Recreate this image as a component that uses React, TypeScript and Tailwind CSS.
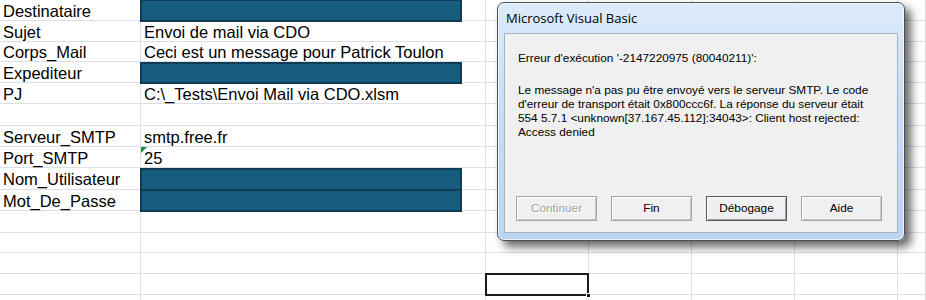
import React from "react";

const rowHeights = [21, 21, 20, 21, 21, 22, 21, 21, 22, 21, 22, 20, 21, 21, 10];
const colWidths = [141, 345, 103, 103, 103, 103, 28];

const rows: [string, string][] = [
  ["Destinataire", ""],
  ["Sujet", "Envoi de mail via CDO"],
  ["Corps_Mail", "Ceci est un message pour Patrick Toulon"],
  ["Expediteur", ""],
  ["PJ", "C:\\_Tests\\Envoi Mail via CDO.xlsm"],
  ["", ""],
  ["Serveur_SMTP", "smtp.free.fr"],
  ["Port_SMTP", "25"],
  ["Nom_Utilisateur", ""],
  ["Mot_De_Passe", ""],
  ["", ""],
  ["", ""],
  ["", ""],
  ["", ""],
  ["", ""],
];

function Button({ label, disabled, isDefault }: { label: string; disabled?: boolean; isDefault?: boolean }) {
  return (
    <div
      className={
        "w-[81px] h-[25px] flex items-center justify-center bg-[#f0f0f0] border " +
        (isDefault
          ? "border-[#5b5b5b] shadow-[inset_1px_1px_0_#ffffff,inset_-1px_-1px_0_#a0a0a0]"
          : "border-[#a5a5a5] shadow-[inset_1px_1px_0_#ffffff,inset_-1px_-1px_0_#c8c8c8]")
      }
    >
      <span
        className={
          "text-[11.8px] leading-none " +
          (disabled ? "text-[#a3a3a3] [text-shadow:1px_1px_0_#ffffff]" : "text-black")
        }
      >
        {label}
      </span>
    </div>
  );
}

export default function App() {
  return (
    <div className="relative w-[926px] h-[300px] overflow-hidden bg-white">
      {/* Spreadsheet grid */}
      <div className="flex flex-col font-['Liberation_Sans',Arial,sans-serif] text-[16.5px] leading-none text-black">
        {rows.map((r, i) => (
          <div key={i} className="flex" style={{ height: rowHeights[i] }}>
            {colWidths.map((w, j) => (
              <div
                key={j}
                className="relative shrink-0 border-r border-b border-[#dadfea] flex items-center overflow-visible whitespace-nowrap"
                style={{ width: w }}
              >
                {j === 0 && r[0] && <span className="pl-[3px] pt-[2px]">{r[0]}</span>}
                {j === 1 && r[1] && <span className="pl-[3px] pt-[2px]">{r[1]}</span>}
                {j === 1 && i === 7 && (
                  <div className="absolute left-0 top-0 w-0 h-0 border-t-[6px] border-r-[6px] border-t-[#1f8f3a] border-r-transparent" />
                )}
              </div>
            ))}
          </div>
        ))}
      </div>

      {/* Redaction boxes */}
      <div className="absolute left-[140px] top-[-1px] w-[322px] h-[23px] bg-[#175d7f] border-2 border-[#0f3d55]" />
      <div className="absolute left-[140px] top-[62px] w-[322px] h-[22px] bg-[#175d7f] border-2 border-[#0f3d55]" />
      <div className="absolute left-[140px] top-[168px] w-[322px] h-[23px] bg-[#175d7f] border-2 border-[#0f3d55]" />
      <div className="absolute left-[140px] top-[189px] w-[322px] h-[23px] bg-[#175d7f] border-2 border-[#0f3d55]" />

      {/* Selected cell */}
      <div className="absolute left-[485px] top-[273px] w-[104px] h-[23px] border-2 border-[#1a1a1a]" />
      <div className="absolute left-[586px] top-[293px] w-[5px] h-[5px] bg-[#1a1a1a] border border-white" />

      {/* Dialog */}
      <div className="absolute left-[497px] top-[2px] w-[408px] h-[239px] rounded-[7px] border border-[#4b5057] bg-[linear-gradient(180deg,#dcebfb_0%,#c9def5_40%,#bcd5f1_100%)] shadow-[6px_6px_10px_rgba(0,0,0,0.6),inset_0_0_0_1px_rgba(255,255,255,0.7)] flex flex-col font-['Liberation_Sans',Tahoma,sans-serif]">
        <div className="h-[30px] flex items-center pl-[8px] pt-[1px]">
          <span className="font-['Open_Sans',sans-serif] text-[13px] text-black">Microsoft Visual Basic</span>
        </div>
        <div className="mx-[6px] mb-[7px] flex-1 bg-[#f0f0f0] border border-[#a3b3c4] flex flex-col">
          <div className="pl-[13px] pt-[17px] text-[11.8px] leading-[14px] text-black">
            <div>Erreur d'exécution '-2147220975 (80040211)':</div>
            <div className="mt-[18px]">Le message n'a pas pu être envoyé vers le serveur SMTP. Le code</div>
            <div>d'erreur de transport était 0x800ccc6f. La réponse du serveur était</div>
            <div>554 5.7.1 &lt;unknown[37.167.45.112]:34043&gt;: Client host rejected:</div>
            <div>Access denied</div>
          </div>
          <div className="mt-auto mb-[11px] pl-[11px] flex gap-[14px]">
            <Button label="Continuer" disabled />
            <Button label="Fin" />
            <Button label="Débogage" isDefault />
            <Button label="Aide" />
          </div>
        </div>
      </div>
    </div>
  );
}
